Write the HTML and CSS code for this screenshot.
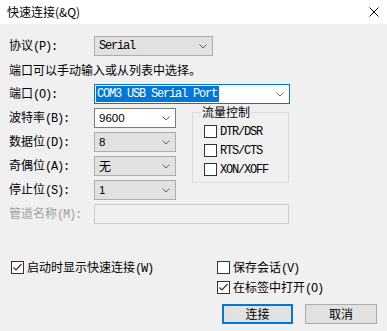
FILE: index.html
```html
<!DOCTYPE html>
<html lang="zh-CN">
<head>
<meta charset="utf-8">
<title>快速连接</title>
<link rel="stylesheet" href="styles.css">
</head>
<body>
<div class="window">
  <div class="titlebar">
    <span class="title">快速连接(&amp;Q)</span>
    <svg class="close" width="10" height="10" viewBox="0 0 10 10"><path d="M0.5 0.5 L9.5 9.5 M9.5 0.5 L0.5 9.5" stroke="#000" stroke-width="1" fill="none"/></svg>
  </div>
  <div class="content">
    <div class="row">
      <span class="label">协议<span class="m">(P):</span></span>
      <div class="combo gray w-proto"><span class="m">Serial</span><svg class="chev" width="8" height="5" viewBox="0 0 8 5"><polyline points="0.5,0.5 4,4 7.5,0.5" fill="none" stroke="#606060"/></svg></div>
    </div>
    <div class="hint">端口可以手动输入或从列表中选择。</div>
    <div class="row">
      <span class="label">端口<span class="m">(O):</span></span>
      <div class="combo focus w-port"><span class="m sel">COM3 USB Serial Port</span><svg class="chev" width="8" height="5" viewBox="0 0 8 5"><polyline points="0.5,0.5 4,4 7.5,0.5" fill="none" stroke="#606060"/></svg></div>
    </div>
    <div class="mid">
      <div class="mid-left">
        <div class="row">
          <span class="label">波特率<span class="m">(B):</span></span>
          <div class="combo white w-small"><span class="s">9600</span><svg class="chev" width="8" height="5" viewBox="0 0 8 5"><polyline points="0.5,0.5 4,4 7.5,0.5" fill="none" stroke="#606060"/></svg></div>
        </div>
        <div class="row">
          <span class="label">数据位<span class="m">(D):</span></span>
          <div class="combo gray w-small"><span class="s">8</span><svg class="chev" width="8" height="5" viewBox="0 0 8 5"><polyline points="0.5,0.5 4,4 7.5,0.5" fill="none" stroke="#606060"/></svg></div>
        </div>
        <div class="row">
          <span class="label">奇偶位<span class="m">(A):</span></span>
          <div class="combo gray w-small"><span>无</span><svg class="chev" width="8" height="5" viewBox="0 0 8 5"><polyline points="0.5,0.5 4,4 7.5,0.5" fill="none" stroke="#606060"/></svg></div>
        </div>
        <div class="row">
          <span class="label">停止位<span class="m">(S):</span></span>
          <div class="combo gray w-small"><span class="s">1</span><svg class="chev" width="8" height="5" viewBox="0 0 8 5"><polyline points="0.5,0.5 4,4 7.5,0.5" fill="none" stroke="#606060"/></svg></div>
        </div>
      </div>
      <fieldset class="flow">
        <legend>流量控制</legend>
        <div class="cbrow"><span class="cb"></span><span class="m">DTR/DSR</span></div>
        <div class="cbrow"><span class="cb"></span><span class="m">RTS/CTS</span></div>
        <div class="cbrow"><span class="cb"></span><span class="m">XON/XOFF</span></div>
      </fieldset>
    </div>
    <div class="row disabled pipe">
      <span class="label">管道名称<span class="m">(M):</span></span>
      <div class="field w-pipe"></div>
    </div>
    <div class="bottom">
      <div class="bottom-left">
        <div class="cbrow"><span class="cb"><svg width="11" height="11" viewBox="0 0 11 11"><polyline points="1.5,5.5 4,8 9.5,2" fill="none" stroke="#333" stroke-width="1.2"/></svg></span><span>启动时显示快速连接<span class="m">(W)</span></span></div>
      </div>
      <div class="bottom-right">
        <div class="cbrow"><span class="cb"></span><span>保存会话<span class="m">(V)</span></span></div>
        <div class="cbrow"><span class="cb"><svg width="11" height="11" viewBox="0 0 11 11"><polyline points="1.5,5.5 4,8 9.5,2" fill="none" stroke="#333" stroke-width="1.2"/></svg></span><span>在标签中打开<span class="m">(O)</span></span></div>
        <div class="buttons">
          <button class="btn default">连接</button>
          <button class="btn cancel">取消</button>
        </div>
      </div>
    </div>
  </div>
</div>
</body>
</html>
```
FILE: styles.css
```css
html, body {
  margin: 0;
  padding: 0;
}
body {
  width: 387px;
  height: 331px;
  overflow: hidden;
  background: #f0f0f0;
  font-family: "Noto Sans CJK SC", "Noto Sans", sans-serif;
  font-size: 12px;
  color: #000;
}
.window {
  width: 387px;
  height: 331px;
  background: #f0f0f0;
}
.titlebar {
  height: 24px;
  background: #fff;
  display: flex;
  align-items: center;
  justify-content: space-between;
  padding: 0 8px 0 7px;
}
.title {
  font-size: 12px;
  line-height: 16px;
}
.close {
  display: block;
}
.content {
  padding: 12px 0 0 9px;
}
.m {
  font-family: "Liberation Mono", "DejaVu Sans Mono", monospace;
  font-size: 12px;
  letter-spacing: -1.2px;
}
.s {
  font-family: "Liberation Sans", Arial, sans-serif;
  font-size: 11.5px;
}
.row {
  display: flex;
  align-items: center;
  height: 20px;
}
.label {
  width: 85px;
  flex: none;
  white-space: nowrap;
  line-height: 20px;
}
.combo {
  box-sizing: border-box;
  height: 20px;
  display: flex;
  align-items: center;
  padding-left: 4px;
  border: 1px solid #adadad;
  line-height: 16px;
}
.combo.gray {
  background: #e1e1e1;
}
.combo.white {
  background: #fff;
  border-color: #7a7a7a;
}
.combo.focus {
  background: #fff;
  border-color: #0078d7;
  padding-left: 1px;
}
.chev {
  margin-left: auto;
  margin-right: 5px;
  flex: none;
}
.sel {
  background: #0078d7;
  color: #fff;
  padding: 0 2px 0 1px;
}
.w-proto { width: 119px; }
.w-port { width: 196px; }
.w-small { width: 82px; }
.w-pipe { width: 195px; }
.hint {
  margin: 6px 0;
  line-height: 16px;
  white-space: nowrap;
}
.mid {
  display: flex;
  align-items: flex-start;
  margin-top: 4px;
}
.mid-left {
  display: flex;
  flex-direction: column;
  gap: 4px;
}
.flow {
  margin: -3px 0 0 16px;
  width: 97px;
  box-sizing: border-box;
  border: 1px solid #dcdcdc;
  padding: 3px 0 3px 8px;
  min-width: 0;
}
.flow legend {
  padding: 0 1px;
  line-height: 14px;
  font-size: 12px;
}
.flow .cbrow {
  height: 19px;
  margin-left: 3px;
}
.cbrow {
  display: flex;
  align-items: center;
  gap: 3px;
  height: 20px;
  white-space: nowrap;
}
.cb {
  box-sizing: border-box;
  width: 13px;
  height: 13px;
  border: 1px solid #333;
  background: #fff;
  flex: none;
  display: flex;
  align-items: center;
  justify-content: center;
}
.cb svg {
  display: block;
}
.disabled .label {
  color: #a0a0a0;
}
.pipe {
  margin-top: 4px;
}
.field {
  box-sizing: border-box;
  height: 20px;
  border: 1px solid #cccccc;
  background: #f0f0f0;
}
.bottom {
  display: flex;
  margin-top: 33px;
}
.bottom-left {
  width: 208px;
  padding-left: 2px;
  box-sizing: border-box;
}
.bottom-right {
  display: flex;
  flex-direction: column;
}
.buttons {
  display: flex;
  gap: 12px;
  margin-top: 7px;
  padding-left: 5px;
}
.btn {
  box-sizing: border-box;
  height: 20px;
  margin: 0;
  padding: 0;
  font-family: "Noto Sans CJK SC", sans-serif;
  font-size: 12px;
  color: #000;
  background: #e1e1e1;
  border: 1px solid #adadad;
  line-height: 16px;
}
.btn.default {
  width: 71px;
  border: 2px solid #0078d7;
}
.btn.cancel {
  width: 72px;
}
```
